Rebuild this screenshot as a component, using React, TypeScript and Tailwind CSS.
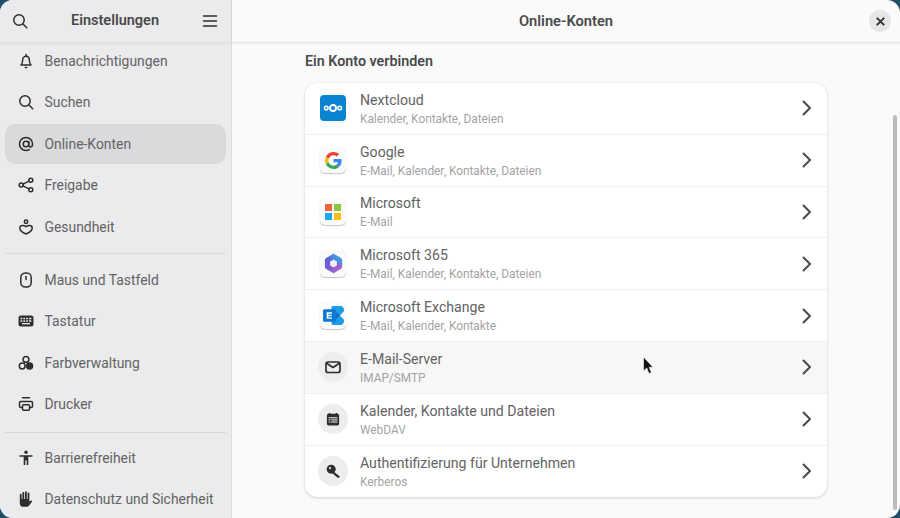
import React from "react";

const stroke = { fill: "none", stroke: "currentColor", strokeWidth: 1.5, strokeLinecap: "round" as const, strokeLinejoin: "round" as const };

function Ico({ children, size = 16 }: { children: React.ReactNode; size?: number }) {
  return (
    <svg width={size} height={size} viewBox="0 0 16 16" className="shrink-0 text-[#2e2e2e]">
      {children}
    </svg>
  );
}

const SearchI = ({ size = 16 }: { size?: number }) => (
  <Ico size={size}><g {...stroke}><circle cx="7" cy="7" r="5.2" /><path d="M11 11l3.7 3.7" /></g></Ico>
);
const BellI = () => (
  <Ico><g {...stroke}><path d="M3 12h10c-1-1-1.6-2-1.6-4.4C11.4 5 10 3.2 8 3.2S4.600 5 4.600 7.600C4.600 10 4 11 3 12z" /><path d="M8 1.500v1.500" /></g><rect x="6.500" y="13.700" width="3" height="1.500" rx=".7" fill="currentColor" /></Ico>
);
const AtI = () => (
  <Ico><g {...stroke}><circle cx="8" cy="8" r="2.800" /><path d="M10.800 5.500v3.500c0 1.200.8 2 1.800 2s1.900-1.200 1.900-3C14.500 4.400 11.600 1.500 8 1.500S1.500 4.400 1.500 8 4.400 14.500 8 14.500c1.300 0 2.400-.3 3.400-.9" /></g></Ico>
);
const ShareI = () => (
  <Ico><g {...stroke}><circle cx="3.200" cy="8" r="2" /><circle cx="12.800" cy="3.300" r="2" /><circle cx="12.800" cy="12.700" r="2" /><path d="M5 7.100l6-3M5 8.900l6 3" /></g></Ico>
);
const HealthI = () => (
  <Ico><g {...stroke}><circle cx="8" cy="2.700" r="1.700" /><path d="M8 7.700c-1-.9-2-1.200-3.300-1.200C3 6.500 1.800 7.500 1.800 9c0 2.600 3 4.700 6.200 6 3.200-1.300 6.200-3.400 6.200-6 0-1.500-1.200-2.500-2.900-2.500-1.300 0-2.300.3-3.300 1.200z" /></g></Ico>
);
const MouseI = () => (
  <Ico><g {...stroke}><rect x="2.800" y="1" width="10.400" height="14" rx="4.500" /><path d="M8 4.500v3" /></g></Ico>
);
const KeyboardI = () => (
  <Ico>
    <rect x="0.500" y="2.500" width="15" height="11" rx="2.500" fill="currentColor" />
    <g fill="#ebebed">
      <rect x="2.500" y="4.800" width="1.800" height="1.500" /><rect x="5.300" y="4.800" width="1.800" height="1.500" /><rect x="8.100" y="4.800" width="1.800" height="1.500" /><rect x="11" y="4.800" width="2.300" height="1.500" />
      <rect x="2.500" y="7.300" width="1.800" height="1.500" /><rect x="5.300" y="7.300" width="1.800" height="1.500" /><rect x="8.100" y="7.300" width="1.800" height="1.500" /><rect x="11" y="7.300" width="2.300" height="1.500" />
      <rect x="4" y="10" width="8" height="1.300" />
    </g>
  </Ico>
);
const ColorI = () => (
  <Ico>
    <g {...stroke}><circle cx="8" cy="4.400" r="2.900" /><circle cx="4.200" cy="11" r="2.900" /></g>
    <circle cx="11.600" cy="11" r="3.700" fill="currentColor" />
  </Ico>
);
const PrinterI = () => (
  <Ico><g {...stroke}><path d="M4.500 1.800h7" /><path d="M4 11.500H2.700c-.7 0-1.200-.5-1.200-1.200V6.700c0-.7.500-1.200 1.200-1.200h10.600c.7 0 1.200.5 1.200 1.200v3.600c0 .7-.5 1.200-1.200 1.200H12" /><rect x="4.500" y="8.800" width="7" height="5.500" rx="1" /></g></Ico>
);
const A11yI = () => (
  <Ico>
    <circle cx="8" cy="2.300" r="1.700" fill="currentColor" />
    <path d="M1.500 5.200h13v1.600H10.300V15H8.700v-4.500H7.300V15H5.700V6.800H1.500z" fill="currentColor" />
  </Ico>
);
const HandI = () => (
  <Ico>
    <path d="M1.800 3.800c0-.6.400-1 .9-1s.9.400.9 1V8h.8V1.900c0-.6.400-1 .9-1s.9.400.9 1V8h.8V1.300c0-.6.400-1 .9-1s.9.400.9 1V8h.8V2.500c0-.6.400-1 .9-1s.9.400.9 1v8.300l1.100-1.100c.4-.4 1-.4 1.300 0 .3.300.3.800 0 1.200l-2.200 3c-.9 1.200-2.200 1.900-3.600 1.900H5.200c-1.900 0-3.400-1.500-3.400-3.400z" fill="currentColor" />
  </Ico>
);

const Chevron = () => (
  <svg width="16" height="16" viewBox="0 0 16 16" className="shrink-0">
    <path d="M4.500 1.500L11 8l-6.500 6.500" fill="none" stroke="#4a4a4c" strokeWidth="2" strokeLinecap="round" strokeLinejoin="round" />
  </svg>
);

const Tile = ({ children, bg = "bg-[#fbfbfb]" }: { children: React.ReactNode; bg?: string }) => (
  <div className={`mx-[2px] w-[26px] h-[26px] rounded-[5px] ${bg} shadow-[0_1px_1px_rgba(0,0,0,0.22),0_0_1px_rgba(0,0,0,0.14)] flex items-center justify-center`}>
    {children}
  </div>
);

const Round = ({ children }: { children: React.ReactNode }) => (
  <div className="w-[30px] h-[30px] rounded-full bg-[#ededed] flex items-center justify-center text-[#2e2e2e]">{children}</div>
);

const NextcloudLogo = () => (
  <div className="mx-[2px] w-[26px] h-[26px] rounded-[4px] bg-[#0a84d0] flex items-center justify-center">
    <svg width="20" height="10" viewBox="0 0 20 10">
      <g fill="none" stroke="#fff">
        <circle cx="10" cy="5" r="3" strokeWidth="1.900" />
        <circle cx="3.300" cy="5" r="1.800" strokeWidth="1.500" />
        <circle cx="16.700" cy="5" r="1.800" strokeWidth="1.500" />
      </g>
    </svg>
  </div>
);

const GoogleLogo = () => (
  <svg width="17" height="17" viewBox="0 0 48 48">
    <path fill="#EA4335" d="M24 9.500c3.500 0 6.700 1.300 9.200 3.400l6.900-6.900C35.900 2.400 30.300 0 24 0 14.600 0 6.500 5.400 2.600 13.200l8 6.200C12.500 13.600 17.800 9.500 24 9.500z" />
    <path fill="#4285F4" d="M47 24.500c0-1.600-.2-3.100-.4-4.500H24v9h12.900c-.6 3-2.200 5.500-4.700 7.200l7.700 6C44.400 37.900 47 31.800 47 24.500z" />
    <path fill="#FBBC05" d="M10.600 28.600c-.5-1.400-.8-3-.8-4.600s.3-3.200.8-4.600l-8-6.200C.9 16.500 0 20.100 0 24s.9 7.500 2.600 10.800z" />
    <path fill="#34A853" d="M24 48c6.500 0 11.900-2.100 15.900-5.800l-7.700-6c-2.200 1.500-4.900 2.300-8.200 2.300-6.200 0-11.500-4.100-13.400-9.900l-8 6.200C6.500 42.600 14.600 48 24 48z" />
  </svg>
);

const MicrosoftLogo = () => (
  <div className="grid grid-cols-2 gap-[1.500px] w-[16px] h-[16px]">
    <div className="bg-[#f2643a]" />
    <div className="bg-[#8cc63e]" />
    <div className="bg-[#1ea8f0]" />
    <div className="bg-[#ffbd1a]" />
  </div>
);

const M365Logo = () => (
  <svg width="21" height="21" viewBox="0 0 20 20">
    <defs>
      <linearGradient id="m1" x1="0" y1="0" x2="1" y2="1">
        <stop offset="0" stopColor="#4a6fdc" />
        <stop offset="0.5" stopColor="#7e5cd4" />
        <stop offset="1" stopColor="#c868c8" />
      </linearGradient>
      <linearGradient id="m2" x1="1" y1="0" x2="0" y2="1">
        <stop offset="0" stopColor="#37b8dc" />
        <stop offset="0.7" stopColor="#4f7fe0" />
        <stop offset="1" stopColor="#6a5ad0" />
      </linearGradient>
    </defs>
    <path d="M10 .8l7 4c.8.500 1.200 1.200 1.200 2v6.400c0 .8-.4 1.500-1.200 2l-7 4-7-4c-.8-.5-1.200-1.200-1.200-2V6.800c0-.8.400-1.500 1.200-2z" fill="url(#m1)" />
    <path d="M10 .8l7 4c.8.500 1.200 1.200 1.200 2v5l-5.200-3V8.300L7 5z" fill="url(#m2)" />
    <path d="M10 6.300l3.200 1.850v3.700L10 13.700l-3.200-1.850v-3.700z" fill="#f1edfa" />
  </svg>
);

const ExchangeLogo = () => (
  <svg width="23" height="23" viewBox="0 0 22 22">
    <path d="M9 3.500C9 2.700 9.700 2 10.500 2h8.300L21 4.200V7l-3.800 4 3.800 4v2.800L18.800 20h-8.300C9.700 20 9 19.300 9 18.500z" fill="#1f9ce8" />
    <path d="M13 7.500l4.200 3.500-4.200 3.500z" fill="#0f6cbd" />
    <rect x="1" y="5" width="12.500" height="12" rx="1.500" fill="#0f78d4" />
    <path d="M4.500 8h5v1.300H6v1.100h3.200v1.200H6v1.200h3.500V14h-5z" fill="#fff" />
  </svg>
);

const MailI = () => (
  <svg width="16" height="16" viewBox="0 0 16 16"><g {...stroke} strokeWidth={1.700}><rect x="1" y="3" width="14" height="10.500" rx="2" /><path d="M2 4.500l6 4 6-4" /></g></svg>
);
const CalI = () => (
  <svg width="14" height="14" viewBox="0 0 16 16">
    <path d="M3 1h2v1h6V1h2v1c1.200 0 2 .8 2 2v9.500c0 1.200-.8 2-2 2H3c-1.200 0-2-.8-2-2V4c0-1.200.8-2 2-2z" fill="currentColor" />
    <g fill="#ededed"><rect x="3" y="6" width="10" height="1.200" /><rect x="3" y="8.400" width="2" height="1.200" /><rect x="6" y="8.400" width="7" height="1.200" /><rect x="3" y="10.800" width="2" height="1.200" /><rect x="6" y="10.800" width="7" height="1.200" /></g>
  </svg>
);
const KeyI = () => (
  <svg width="15" height="15" viewBox="0 0 16 16">
    <circle cx="5.500" cy="5.500" r="4.800" fill="currentColor" />
    <path d="M8 8l6.500 5-.5 2-2-.5-5.500-5z" fill="currentColor" />
    <circle cx="4.300" cy="4.300" r="1.200" fill="#ededed" />
  </svg>
);

const group1: [string, React.ReactNode, boolean?][] = [
  ["Benachrichtigungen", <BellI />],
  ["Suchen", <SearchI />],
  ["Online-Konten", <AtI />, true],
  ["Freigabe", <ShareI />],
  ["Gesundheit", <HealthI />],
];
const group2: [string, React.ReactNode][] = [
  ["Maus und Tastfeld", <MouseI />],
  ["Tastatur", <KeyboardI />],
  ["Farbverwaltung", <ColorI />],
  ["Drucker", <PrinterI />],
];
const group3: [string, React.ReactNode][] = [
  ["Barrierefreiheit", <A11yI />],
  ["Datenschutz und Sicherheit", <HandI />],
];

const accounts: [string, string, React.ReactNode, boolean?][] = [
  ["Nextcloud", "Kalender, Kontakte, Dateien", <NextcloudLogo />],
  ["Google", "E-Mail, Kalender, Kontakte, Dateien", <Tile><GoogleLogo /></Tile>],
  ["Microsoft", "E-Mail", <Tile><MicrosoftLogo /></Tile>],
  ["Microsoft 365", "E-Mail, Kalender, Kontakte, Dateien", <Tile><M365Logo /></Tile>],
  ["Microsoft Exchange", "E-Mail, Kalender, Kontakte", <Tile><ExchangeLogo /></Tile>],
  ["E-Mail-Server", "IMAP/SMTP", <Round><MailI /></Round>, true],
  ["Kalender, Kontakte und Dateien", "WebDAV", <Round><CalI /></Round>],
  ["Authentifizierung für Unternehmen", "Kerberos", <Round><KeyI /></Round>],
];

function NavRow({ label, icon, active }: { label: string; icon: React.ReactNode; active?: boolean }) {
  return (
    <div className={`h-[40px] mb-[1.500px] mx-[5px] rounded-[10px] flex items-center pl-[12.500px] gap-[11px] text-[13.900px] text-[#636365] ${active ? "bg-[#dadadc]" : ""}`}>
      {icon}
      <span className="pt-[1.500px]">{label}</span>
    </div>
  );
}

export default function App() {
  return (
    <div className="w-[900px] h-[518px] bg-[#1d4f66] overflow-hidden font-['Roboto',sans-serif]">
      <div className="relative w-full h-full rounded-[13px] overflow-hidden flex bg-[#fafafb]">
        <aside className="w-[232px] shrink-0 flex flex-col bg-[#ebebed] border-r border-[#dcdcde]">
          <header className="h-[43px] shrink-0 flex items-center justify-between pl-[12px] pr-[13px] border-b border-[#dfdfe1] shadow-[0_1px_2px_rgba(0,0,0,0.05)] z-10 bg-[#ebebed]">
            <SearchI />
            <span className="text-[14.500px] font-semibold text-[#4a4a4c]">Einstellungen</span>
            <svg width="16" height="16" viewBox="0 0 16 16">
              <path d="M1.500 3h13M1.500 8h13M1.500 13h13" stroke="#2e2e2e" strokeWidth="1.500" strokeLinecap="round" />
            </svg>
          </header>
          <nav className="flex-1 overflow-hidden">
            <div className="-mt-[2.500px]">
              {group1.map(([l, i, a]) => <NavRow key={l} label={l} icon={i} active={a} />)}
              <div className="h-px bg-[#d9d9db] mx-[5px] my-[6px]" />
              {group2.map(([l, i]) => <NavRow key={l} label={l} icon={i} />)}
              <div className="h-px bg-[#d9d9db] mx-[5px] mt-[7.500px] mb-[5px]" />
              {group3.map(([l, i]) => <NavRow key={l} label={l} icon={i} />)}
            </div>
          </nav>
        </aside>

        <main className="flex-1 flex flex-col min-w-0">
          <header className="h-[43px] shrink-0 flex items-center justify-center relative border-b border-[#e4e4e6] shadow-[0_1px_2px_rgba(0,0,0,0.04)]">
            <span className="text-[14.700px] font-semibold text-[#4a4a4c]">Online-Konten</span>
            <div className="absolute right-[9px] top-[10px] w-[22px] h-[22px] rounded-full bg-[#e6e6e7] flex items-center justify-center">
              <svg width="9" height="9" viewBox="0 0 10 10">
                <path d="M1.500 1.500l7 7M8.500 1.500l-7 7" stroke="#333" strokeWidth="2.200" strokeLinecap="round" />
              </svg>
            </div>
          </header>
          <div className="flex-1 pl-[73px] pr-[72px] relative overflow-hidden">
            <h2 className="text-[14.300px] font-semibold text-[#4a4a4c] h-[40px] pt-[7.500px] leading-[20px]">Ein Konto verbinden</h2>
            <div className="w-[522px] rounded-[12px] bg-white shadow-[0_1px_3px_rgba(0,0,0,0.16),0_0_1px_rgba(0,0,0,0.1)] overflow-hidden">
              {accounts.map(([t, s, icon, hover], idx) => (
                <div
                  key={t}
                  className={`h-[51.800px] flex items-center pl-[13px] pr-[12.500px] ${hover ? "bg-[#f7f7f7]" : ""} ${idx < accounts.length - 1 ? "border-b border-[#efefef]" : ""}`}
                >
                  <div className="w-[30px] flex items-center justify-center shrink-0">{icon}</div>
                  <div className="ml-[12px] flex-1 min-w-0 flex flex-col pt-[1px]">
                    <span className="text-[14.100px] leading-[19px] text-[#636365]">{t}</span>
                    <span className="text-[11.850px] leading-[15px] mt-[2px] text-[#a3a3a5]">{s}</span>
                  </div>
                  <Chevron />
                </div>
              ))}
            </div>
            <div className="absolute right-[3px] top-[72px] bottom-[8px] w-[4px] rounded-full bg-[#bcbcbe]" />
          </div>
          <svg className="absolute left-[642px] top-[356px]" width="13" height="20" viewBox="0 0 13 20">
            <path d="M1.500 1v14l3.300-3 2.200 5.500 2.400-1-2.200-5.300H11z" fill="#111" stroke="#fff" strokeWidth=".6" />
          </svg>
        </main>
      </div>
    </div>
  );
}
